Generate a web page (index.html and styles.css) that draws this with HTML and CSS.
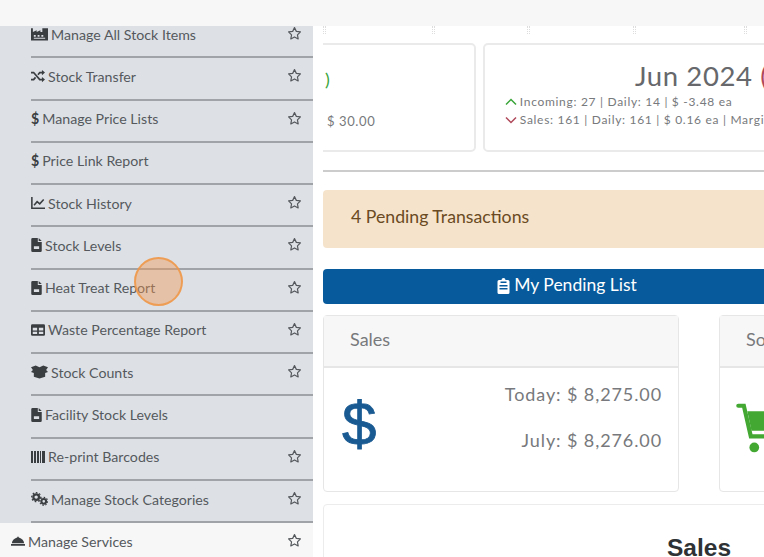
FILE: index.html
```html
<!DOCTYPE html>
<html lang="en">
<head>
<meta charset="utf-8">
<title>Dashboard</title>
<link rel="stylesheet" href="styles.css">
</head>
<body>
<svg class="defs" width="0" height="0" aria-hidden="true">
  <symbol id="star" viewBox="0 0 24 24"><path d="M12 2.6l2.9 6 6.6.9-4.8 4.6 1.2 6.6-5.9-3.2-5.9 3.2 1.2-6.6-4.8-4.6 6.6-.9z" fill="none" stroke="currentColor" stroke-width="1.9" stroke-linejoin="round"/></symbol>
  <symbol id="file" viewBox="0 0 12 16"><path d="M1.5 0H7.5V4.5H12V14.5A1.5 1.5 0 0 1 10.500 16H1.500A1.500 1.500 0 0 1 0 14.500V1.500A1.500 1.500 0 0 1 1.500 0ZM8.500 0L12 3.500H8.500ZM3 9.500V12.500H9V9.500Z" fill="currentColor" fill-rule="evenodd"/></symbol>
</svg>
<div class="page">
  <header class="topbar"></header>
  <div class="layout">
    <nav class="sidebar">
      <ul class="menu">
        <li class="item">
          <svg class="ico w16" viewBox="0 0 18 14"><path d="M0 1h2v4l4-2v2l4-2v2h2V1h6v13H0zM3 8v2h2V8zm4 0v2h2V8zm4 0v2h2V8zm-8 3v1h12v-1z" fill="currentColor" fill-rule="evenodd"/></svg>
          <span>Manage All Stock Items</span>
          <svg class="star"><use href="#star"/></svg>
        </li>
        <li class="item">
          <svg class="ico w14" viewBox="0 0 16 14"><path d="M0 3h3l7 8h3M0 11h3l2.200-2.500M8 5.500L10 3h3" fill="none" stroke="currentColor" stroke-width="2"/><path d="M12.500 0L16 3l-3.500 3zM12.500 8l3.500 3-3.500 3z" fill="currentColor"/></svg>
          <span>Stock Transfer</span>
          <svg class="star"><use href="#star"/></svg>
        </li>
        <li class="item">
          <span class="glyph">$</span>
          <span>Manage Price Lists</span>
          <svg class="star"><use href="#star"/></svg>
        </li>
        <li class="item">
          <span class="glyph">$</span>
          <span>Price Link Report</span>
        </li>
        <li class="item">
          <svg class="ico w14" viewBox="0 0 16 14"><path d="M1 0v13h15" fill="none" stroke="currentColor" stroke-width="1.800"/><path d="M3.500 9.500l3.500-4 3 2.500 4.500-5" fill="none" stroke="currentColor" stroke-width="1.800"/></svg>
          <span>Stock History</span>
          <svg class="star"><use href="#star"/></svg>
        </li>
        <li class="item">
          <svg class="ico w10"><use href="#file"/></svg>
          <span>Stock Levels</span>
          <svg class="star"><use href="#star"/></svg>
        </li>
        <li class="item">
          <svg class="ico w10"><use href="#file"/></svg>
          <span>Heat Treat Report</span>
          <svg class="star"><use href="#star"/></svg>
        </li>
        <li class="item">
          <svg class="ico w14" viewBox="0 0 16 13"><path d="M1.500 0h13A1.500 1.500 0 0 1 16 1.500v10a1.500 1.500 0 0 1-1.500 1.500h-13A1.500 1.500 0 0 1 0 11.500v-10A1.500 1.500 0 0 1 1.500 0zM2 4v3h5V4zm7 0v3h5V4zM2 8.500v2.500h5V8.500zm7 0v2.500h5V8.500z" fill="currentColor" fill-rule="evenodd"/></svg>
          <span>Waste Percentage Report</span>
          <svg class="star"><use href="#star"/></svg>
        </li>
        <li class="item">
          <svg class="ico w16" viewBox="0 0 18 14"><path d="M0 2l5-2 4 2 4-2 5 2-2 3 2 2-3 1v4l-6 2-6-2V8L0 7l2-2z" fill="currentColor"/></svg>
          <span>Stock Counts</span>
          <svg class="star"><use href="#star"/></svg>
        </li>
        <li class="item">
          <svg class="ico w10"><use href="#file"/></svg>
          <span>Facility Stock Levels</span>
        </li>
        <li class="item">
          <svg class="ico w14" viewBox="0 0 14 12"><path d="M0 0h2v12H0zM3 0h2v12H3zM6 0h2v12H6zM9 0h1v12H9zM11 0h3v12h-3z" fill="currentColor"/></svg>
          <span>Re-print Barcodes</span>
          <svg class="star"><use href="#star"/></svg>
        </li>
        <li class="item">
          <svg class="ico w16" viewBox="0 0 18 14"><circle cx="5.500" cy="5" r="3" fill="none" stroke="currentColor" stroke-width="2.400"/><circle cx="5.500" cy="5" r="4.800" fill="none" stroke="currentColor" stroke-width="1.200" stroke-dasharray="1.800 1.800"/><circle cx="13.500" cy="9.500" r="2.500" fill="none" stroke="currentColor" stroke-width="2.200"/><circle cx="13.500" cy="9.500" r="4.200" fill="none" stroke="currentColor" stroke-width="1.200" stroke-dasharray="1.600 1.600"/></svg>
          <span>Manage Stock Categories</span>
          <svg class="star"><use href="#star"/></svg>
        </li>
        <li class="item item-active">
          <svg class="ico w14" viewBox="0 0 16 11"><path d="M8 0l1 1.500C12.500 2.500 15 5.500 15 8H1c0-2.500 2.500-5.500 6-6.500zM0 9h16v2H0z" fill="currentColor"/></svg>
          <span>Manage Services</span>
          <svg class="star"><use href="#star"/></svg>
        </li>
      </ul>
    </nav>
    <main class="main">
      <div class="ticks"><i></i><i></i><i></i><i></i><i></i></div>
      <section class="stats">
        <article class="stat stat-prev">
          <div class="stat-big up">)</div>
          <div class="stat-line">$ 30.00</div>
        </article>
        <article class="stat stat-cur">
          <h2 class="stat-title">Jun 2024 <span class="down">(-1%)</span></h2>
          <div class="stat-line">
            <svg class="chev up" viewBox="0 0 12 8"><path d="M1 6.500L6 1.500l5 5" fill="none" stroke="currentColor" stroke-width="1.500"/></svg>
            Incoming: 27 | Daily: 14 | $ -3.48 ea
          </div>
          <div class="stat-line">
            <svg class="chev down" viewBox="0 0 12 8"><path d="M1 1.500L6 6.500l5-5" fill="none" stroke="currentColor" stroke-width="1.500"/></svg>
            Sales: 161 | Daily: 161 | $ 0.16 ea | Margin: 12%
          </div>
        </article>
      </section>
      <hr class="rule">
      <div class="alert">4 Pending Transactions</div>
      <button class="btn" type="button">
        <svg class="btn-ico" viewBox="0 0 12 16"><path d="M1.500 2H4a2 2 0 0 1 4 0h2.500A1.500 1.500 0 0 1 12 3.500v11a1.500 1.500 0 0 1-1.500 1.500h-9A1.500 1.500 0 0 1 0 14.500v-11A1.500 1.500 0 0 1 1.500 2zM2 7v1.500h8V7zm0 3v1.500h8V10zm1-6.500V5h6V3.500z" fill="currentColor" fill-rule="evenodd"/></svg>
        My Pending List
      </button>
      <section class="panels">
        <article class="panel">
          <div class="panel-head">Sales</div>
          <div class="panel-body">
            <span class="dollar">$</span>
            <div class="figures">
              <div>Today: $ 8,275.00</div>
              <div>July: $ 8,276.00</div>
            </div>
          </div>
        </article>
        <article class="panel">
          <div class="panel-head">Sold</div>
          <div class="panel-body">
            <svg class="cart" viewBox="0 0 40 36"><path d="M1.500 2h4l5 22h26" fill="none" stroke="currentColor" stroke-width="3" stroke-linecap="round"/><path d="M8 6h32l-4 14H11z" fill="currentColor"/><circle cx="13" cy="32" r="3.500" fill="currentColor"/><circle cx="33" cy="32" r="3.500" fill="currentColor"/></svg>
          </div>
        </article>
      </section>
      <section class="chart">
        <h3 class="chart-title">Sales</h3>
      </section>
    </main>
  </div>
  <div class="click-mark"></div>
</div>
</body>
</html>
```
FILE: styles.css
```css
* { box-sizing: border-box; }
html, body { margin: 0; padding: 0; }
body {
  background: #fff;
  font-family: "Lato", "Liberation Sans", sans-serif;
  color: #4a4d50;
}
.defs { position: absolute; }
.page {
  position: relative;
  width: 764px;
  height: 557px;
  overflow: hidden;
  display: flex;
  flex-direction: column;
}
.topbar { height: 26px; flex: none; background: #f7f7f7; }
.layout { flex: 1; display: flex; min-height: 0; }

.sidebar { width: 313px; flex: none; background: #dde1e6; overflow: hidden; }
.menu { list-style: none; margin: -10px 0 0; padding: 0; }
.item {
  height: 42.27px;
  margin-left: 31px;
  padding: 0 11px 4px 0;
  display: flex;
  align-items: center;
  gap: 3px;
  font-size: 14.2px;
  color: #55595d;
  border-bottom: 2px solid #a0a4a9;
}
.item-active {
  margin: 0;
  padding: 0 11px 0 11px;
  height: 36px;
  background: #f7f7f7;
  border-bottom: 0;
}
.ico { flex: none; height: 14px; color: #3b3e41; }
.w16 { width: 17px; }
.w14 { width: 14px; }
.w10 { width: 11px; }
.glyph { font-weight: 700; color: #3b3e41; }
.star { width: 15px; height: 15px; margin-left: auto; margin-top: -1px; color: #55595d; flex: none; }

.main { flex: 1; min-width: 0; margin-left: 10px; overflow: hidden; color: #77797c; }
.ticks {
  height: 17px;
  display: grid;
  grid-template-columns: 109px 95px 106px 111px 20px;
}
.ticks i {
  width: 3px;
  height: 8px;
  border-left: 1px dotted #dddddd;
  border-right: 1px dotted #dddddd;
}
.stats { display: flex; gap: 7px; margin-left: -10px; width: 570px; }
.stat {
  height: 109px;
  background: #fff;
  border: 2px solid #eaeaea;
  border-radius: 5px;
  flex: none;
}
.stat-prev { width: 163px; padding: 22px 0 0 10px; }
.stat-big { font-size: 18px; line-height: 24px; }
.stat-prev .stat-line { margin: 21px 0 0 2px; font-size: 13px; letter-spacing: .6px; }
.stat-cur { width: 394px; padding: 13px 0 0 20px; }
.stat-title {
  margin: 0 0 -1px;
  padding-left: 130px;
  font-size: 27.5px;
  line-height: 36px;
  font-weight: 400;
  white-space: nowrap;
  letter-spacing: .6px;
  color: #66686b;
}
.stat-line { font-size: 12px; line-height: 18px; white-space: nowrap; letter-spacing: .7px; }
.chev { width: 12px; height: 8px; margin-right: -1px; }
.up { color: #3aa53a; }
.down { color: #b0485a; }
.rule { margin: 18px 0 18px; height: 2px; border: 0; background: #cccccc; width: 752px; }
.alert {
  width: 752px;
  height: 58px;
  padding: 0 0 5px 28px;
  display: flex;
  align-items: center;
  background: #f5e3cc;
  border-radius: 4px;
  color: #6a4a22;
  font-size: 17.7px;
}
.btn {
  margin: 21px 0 11px;
  width: 488px;
  height: 35px;
  padding: 0 0 5px;
  display: flex;
  align-items: center;
  justify-content: center;
  gap: 4px;
  background: #075a9b;
  color: #fff;
  border: 0;
  border-radius: 4px;
  font: 17.5px "Lato", "Liberation Sans", sans-serif;
}
.btn-ico { width: 13px; height: 16px; margin: 4px 0 0; }
.panels { display: grid; grid-template-columns: 356px 356px; gap: 40px; width: 752px; }
.panel { height: 177px; border: 1px solid #e6e6e6; border-radius: 4px; background: #fff; }
.panel-head {
  height: 52px;
  padding: 0 0 5px 26px;
  display: flex;
  align-items: center;
  background: #f7f7f7;
  border-bottom: 2px solid #e6e6e6;
  font-size: 18px;
  color: #77797c;
}
.panel-body { display: flex; justify-content: space-between; padding: 0 16px 0 18px; }
.dollar { font: 62px/1 "Liberation Sans", sans-serif; -webkit-text-stroke: .8px #1a5a92; margin-top: 25px; color: #1a5a92; }
.figures { text-align: right; font-size: 18px; letter-spacing: .9px; line-height: 24px; padding-top: 14px; color: #77797c; }
.figures div + div { margin-top: 22px; }
.cart { width: 56px; height: 50px; margin: 35px 0 0 -2px; color: #42a832; flex: none; }
.chart {
  width: 752px;
  height: 120px;
  margin-top: 12px;
  border: 1px solid #ececec;
  border-radius: 4px;
  text-align: center;
}
.chart-title {
  margin: 29px 0 0;
  font: 700 24.5px "Liberation Sans", sans-serif;
  color: #2f3235;
}
.click-mark {
  position: absolute;
  left: 134px;
  top: 257px;
  width: 49px;
  height: 49px;
  border-radius: 50%;
  background: rgba(240, 150, 80, .42);
  border: 2px solid rgba(240, 150, 70, .85);
}
```
